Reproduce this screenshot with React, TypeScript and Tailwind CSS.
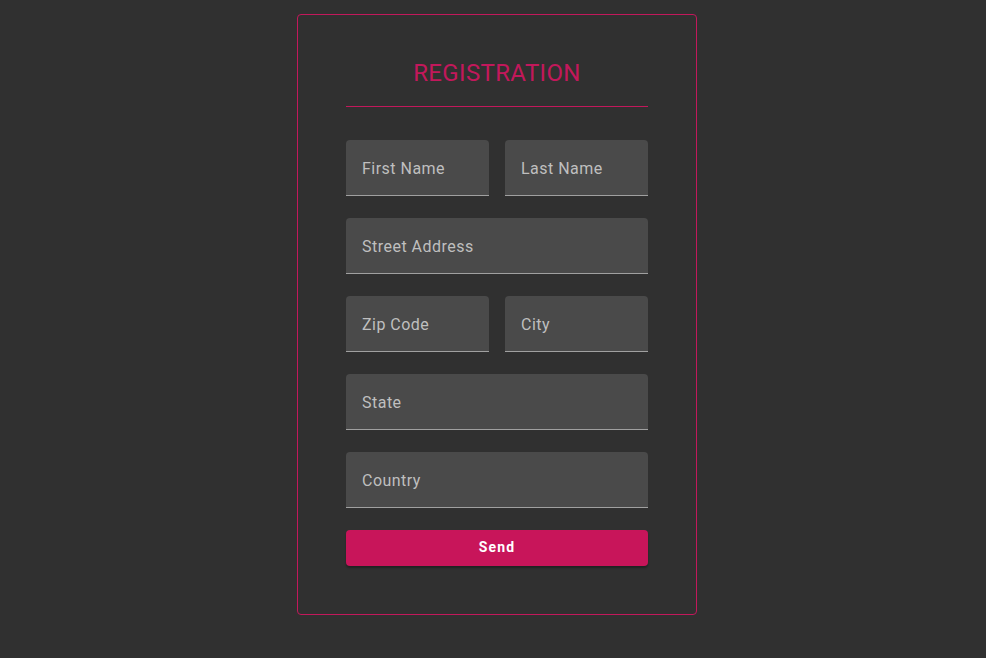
import { FC } from "react";

/* FIELD */

interface FieldProps {
  label: string;
}

const Field: FC<FieldProps> = ({ label }) => {
  return (
    <div className="flex h-14 items-center rounded-t border-b border-[#a0a0a0] bg-[#4a4a4a] px-4 pt-[2px]">
      <span className="text-base leading-6 tracking-[0.03em] text-[#bfbfbf]">
        {label}
      </span>
    </div>
  );
};

const App: FC = () => {
  return (
    <div
      className="min-h-[658px] w-full bg-[#303030] pl-2 pt-[14px]"
      style={{ fontFamily: "Roboto, 'Liberation Sans', sans-serif" }}
    >
      <div className="mx-auto flex w-[400px] flex-col rounded border border-[#c2185b] px-12 pb-12 pt-[43px]">
        {/* Title */}
        <h1 className="text-center text-[24px] font-normal leading-[30px] tracking-[0.015em] text-[#c2185b]">
          REGISTRATION
        </h1>
        <div className="mt-[18px] border-t border-[#c2185b]" />

        {/* Fields */}
        <div className="mt-[33px] flex flex-col gap-[22px]">
          <div className="grid grid-cols-2 gap-4">
            <Field label="First Name" />
            <Field label="Last Name" />
          </div>
          <Field label="Street Address" />
          <div className="grid grid-cols-2 gap-4">
            <Field label="Zip Code" />
            <Field label="City" />
          </div>
          <Field label="State" />
          <Field label="Country" />
          <button className="h-9 rounded bg-[#c8155a] pb-[3px] text-sm font-bold tracking-[0.08em] text-white shadow-[0_2px_2px_rgba(0,0,0,0.3)]">
            Send
          </button>
        </div>
      </div>
    </div>
  );
};

export default App;
